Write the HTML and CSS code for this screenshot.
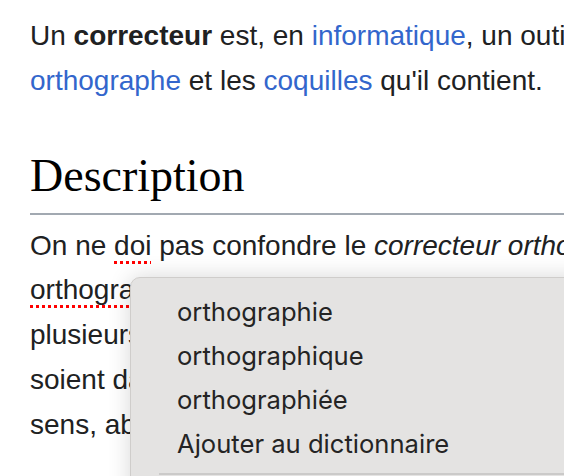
FILE: index.html
```html
<!DOCTYPE html>
<html lang="fr">
<head>
<meta charset="utf-8">
<link rel="stylesheet" href="styles.css">
</head>
<body>
<main class="content">
  <p class="para first">
    <span class="line">Un <b>correcteur</b> est, en <a href="#">informatique</a>, un outil qui permet de repérer les fautes d'</span>
    <span class="line"><a href="#">orthographe</a> et les <a href="#">coquilles</a> qu'il contient.</span>
  </p>
  <h2 class="heading">Description</h2>
  <p class="para">
    <span class="line">On ne <span class="typo">doi</span> pas confondre le <i>correcteur orthographique</i> avec le correcteur</span>
    <span class="line"><span class="typo">orthograhique</span> ou le correcteur grammatical, bien que</span>
    <span class="line">plusieurs logiciels combinent ces fonctions et qu'elles</span>
    <span class="line">soient dans la pratique souvent confondues. Au</span>
    <span class="line">sens, abusif, le terme désigne les deux outils.</span>
  </p>
</main>
<div class="menu">
  <div class="item">orthographie</div>
  <div class="item">orthographique</div>
  <div class="item">orthographiée</div>
  <div class="item">Ajouter au dictionnaire</div>
  <div class="sep"></div>
</div>
</body>
</html>
```
FILE: styles.css
```css
html, body {
  margin: 0;
  padding: 0;
  background: #ffffff;
  overflow: hidden;
  width: 564px;
  height: 476px;
}
body {
  position: relative;
  font-family: "Liberation Sans", Arial, sans-serif;
  color: #202122;
}
.content {
  padding: 14px 0 0 30px;
}
.para {
  margin: 0;
  font-size: 28px;
  line-height: 44.8px;
}
.line {
  display: block;
  white-space: nowrap;
}
.para a {
  color: #3366cc;
  text-decoration: none;
}
.para b {
  font-weight: bold;
}
.heading {
  margin: 42px 0 0 0;
  font-family: "Liberation Serif", Georgia, "Times New Roman", serif;
  font-weight: normal;
  font-size: 46px;
  line-height: 60px;
  color: #000000;
  border-bottom: 2px solid #a2a9b1;
  padding-bottom: 7px;
  margin-bottom: 9px;
}
.typo {
  text-decoration: underline dotted #ff0000;
  text-decoration-thickness: 3px;
  text-underline-offset: 6px;
}
.menu {
  position: absolute;
  left: 130px;
  top: 277px;
  width: 520px;
  height: 260px;
  background: #e4e3e2;
  border: 1px solid #cfcdcb;
  border-radius: 10px;
  box-shadow: 0 0 22px rgba(0, 0, 0, 0.16);
  padding-top: 12px;
  font-family: Inter, "Noto Sans", sans-serif;
  color: #242424;
}
.item {
  padding-left: 46px;
  font-size: 25.6px;
  line-height: 44px;
}
.sep {
  margin: 7px 0 0 28px;
  height: 2px;
  background: #cbcac9;
}
```
